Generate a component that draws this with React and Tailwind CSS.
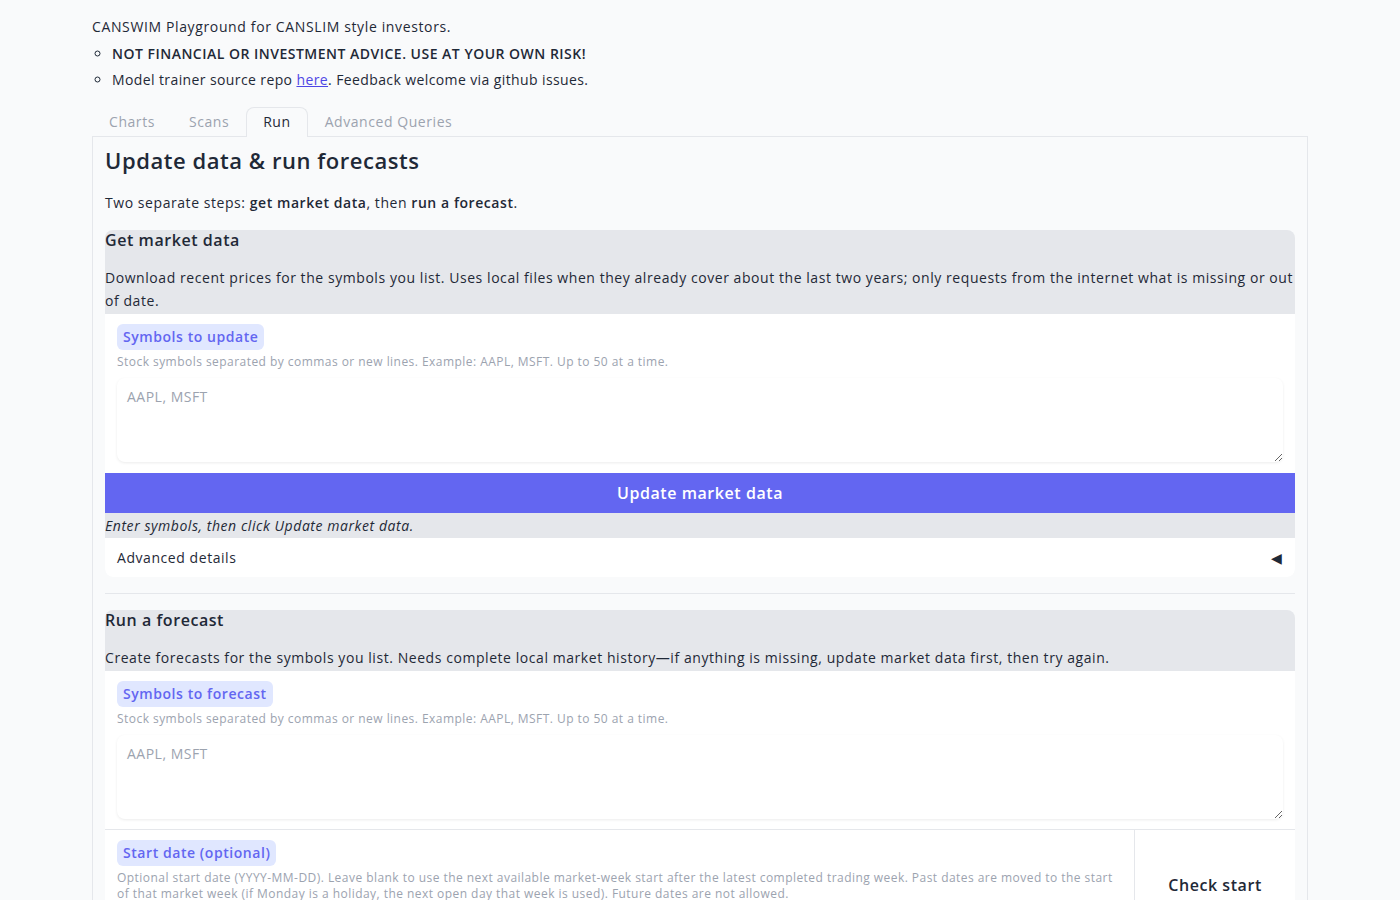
import React from "react";

const font = { fontFamily: '"Open Sans", "Liberation Sans", sans-serif', letterSpacing: "0.035em" };

function Badge({ children }) {
  return (
    <span className="inline-block rounded-md bg-[#e0e7ff] px-[6px] py-[3px] text-[14px] font-semibold leading-[20px] tracking-[0.04em] text-[#6366f1]">
      {children}
    </span>
  );
}

function Info({ children }) {
  return <div className="mt-[4px] text-[12px] leading-[16px] tracking-[0.038em] text-[#9ca3af]">{children}</div>;
}

function Area() {
  return (
    <textarea
      placeholder="AAPL, MSFT"
      className="mt-[8px] block h-[84px] w-full rounded-lg bg-white px-[10px] py-[9px] text-[14px] leading-[20px] text-[#1f2937] shadow-[0_1px_3px_rgba(0,0,0,0.08)] outline-none placeholder:text-[#9ca3af]"
      style={font}
    />
  );
}

export default function App() {
  return (
    <div className="min-h-[900px] bg-[#f9fafb] text-[#1f2937]" style={font}>
      <div className="mx-auto w-[1216px] pt-[17px]">
        <p className="text-[14px] leading-[20px] tracking-[0.045em]">CANSWIM Playground for CANSLIM style investors.</p>
        <ul className="mt-[7px] list-[circle] pl-[20px] text-[14px] leading-[20px]">
          <li className="font-semibold tracking-[0.035em]">NOT FINANCIAL OR INVESTMENT ADVICE. USE AT YOUR OWN RISK!</li>
          <li className="mt-[6px] tracking-[0.028em]">
            Model trainer source repo <a className="text-[#4f46e5] underline" href="#">here</a>. Feedback welcome via github issues.
          </li>
        </ul>

        <div className="mt-[17px] flex items-end border-b border-[#e5e7eb] text-[14px] leading-[20px]">
          <div className="px-[17px] pb-[4px] text-[#9ca3af]">Charts</div>
          <div className="px-[17px] pb-[4px] text-[#9ca3af]">Scans</div>
          <div className="-mb-px rounded-t-lg border border-b-0 border-[#e5e7eb] bg-[#f9fafb] px-[16px] pt-[4px] pb-[5px] text-[#1f2937]">Run</div>
          <div className="px-[17px] pb-[4px] text-[#9ca3af]">Advanced Queries</div>
        </div>

        <div className="border border-t-0 border-[#e5e7eb] px-[12px] pt-[8px]">
          <h2 className="text-[22px] font-semibold leading-[30px] tracking-[0.025em]">Update data &amp; run forecasts</h2>
          <p className="mt-[18px] text-[14px] leading-[20px]">
            Two separate steps: <b className="font-semibold">get market data</b>, then <b className="font-semibold">run a forecast</b>.
          </p>

          <div className="mt-[17px] overflow-hidden rounded-lg">
            <div className="bg-[#e5e7eb]">
              <div className="text-[16px] font-semibold leading-[20px]">Get market data</div>
              <p className="mt-[16px] pb-[2px] text-[14px] leading-[23px]">
                Download recent prices for the symbols you list. Uses local files when they already cover about the last two years; only requests from the internet what is missing or out of date.
              </p>
            </div>
            <div className="bg-white px-[12px] pt-[10px] pb-[11px]">
              <Badge>Symbols to update</Badge>
              <Info>Stock symbols separated by commas or new lines. Example: AAPL, MSFT. Up to 50 at a time.</Info>
              <Area />
            </div>
            <button className="block h-[40px] w-full bg-[#6366f1] text-[16px] font-semibold text-white" style={font}>
              Update market data
            </button>
            <div className="bg-[#e5e7eb] py-[2px] text-[14px] italic leading-[21px]">Enter symbols, then click Update market data.</div>
            <div className="flex h-[39px] items-center justify-between rounded-b-lg bg-white px-[12px] text-[14px]">
              <span>Advanced details</span>
              <span className="text-[14px] text-[#1f2937]">◀</span>
            </div>
          </div>

          <div className="mt-[16px] border-t border-[#e5e7eb]" />

          <div className="mt-[16px] overflow-hidden rounded-t-lg">
            <div className="bg-[#e5e7eb]">
              <div className="text-[16px] font-semibold leading-[20px]">Run a forecast</div>
              <p className="mt-[16px] pb-[2px] text-[14px] leading-[23px]">
                Create forecasts for the symbols you list. Needs complete local market history—if anything is missing, update market data first, then try again.
              </p>
            </div>
            <div className="bg-white px-[12px] pt-[10px] pb-[10px]">
              <Badge>Symbols to forecast</Badge>
              <Info>Stock symbols separated by commas or new lines. Example: AAPL, MSFT. Up to 50 at a time.</Info>
              <Area />
            </div>
            <div className="flex h-[111px] border-t border-[#e5e7eb] bg-white">
              <div className="flex-1 px-[12px] pt-[10px] pb-[10px]">
                <Badge>Start date (optional)</Badge>
                <Info>
                  Optional start date (YYYY-MM-DD). Leave blank to use the next available market-week start after the latest completed trading week. Past dates are moved to the start of that market week (if Monday is a holiday, the next open day that week is used). Future dates are not allowed.
                </Info>
                <input
                  placeholder="YYYY-MM-DD"
                  className="mt-[8px] block h-[40px] w-full rounded-lg bg-white px-[10px] text-[14px] shadow-[0_1px_3px_rgba(0,0,0,0.08)] outline-none placeholder:text-[#9ca3af]"
                  style={font}
                />
              </div>
              <div className="flex w-[161px] items-center justify-center border-l border-[#e5e7eb] text-[16px] font-semibold">
                Check start
              </div>
            </div>
          </div>
        </div>
      </div>
    </div>
  );
}
